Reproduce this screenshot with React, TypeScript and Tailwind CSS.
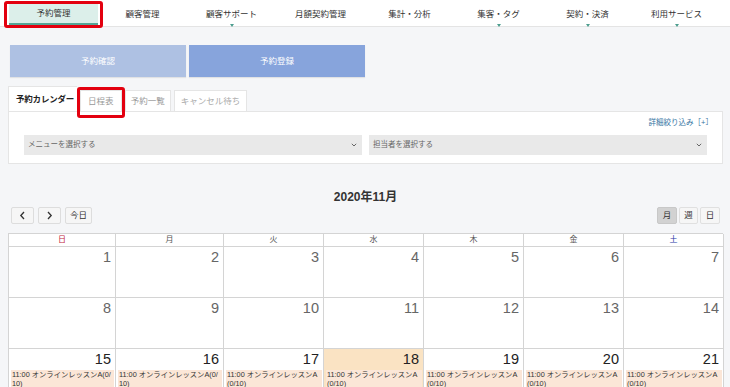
import React from "react";

const navItems = [
  { label: "予約管理", active: true },
  { label: "顧客管理" },
  { label: "顧客サポート", caret: true },
  { label: "月額契約管理" },
  { label: "集計・分析" },
  { label: "集客・タグ", caret: true },
  { label: "契約・決済", caret: true },
  { label: "利用サービス", caret: true },
];

const weekdays = ["日", "月", "火", "水", "木", "金", "土"];
const weeks = [
  [1, 2, 3, 4, 5, 6, 7],
  [8, 9, 10, 11, 12, 13, 14],
  [15, 16, 17, 18, 19, 20, 21],
];
const TODAY = 18;

function Chevron({ dir }: { dir: "left" | "right" }) {
  return (
    <svg width="7" height="9" viewBox="0 0 7 9" fill="none">
      <path
        d={dir === "left" ? "M5 1 L1.8 4.5 L5 8" : "M2 1 L5.2 4.5 L2 8"}
        stroke="#333"
        strokeWidth="1.3"
      />
    </svg>
  );
}

function SelectBox({ placeholder }: { placeholder: string }) {
  return (
    <div className="flex-1 h-[20px] bg-[#e9e9e9] flex items-center justify-between pl-[4px] pr-[5px] text-[7.5px] text-[#666]">
      <span>{placeholder}</span>
      <svg width="6" height="4" viewBox="0 0 6 4">
        <path d="M0.8 0.8 L3 3 L5.2 0.8" stroke="#666" strokeWidth="1" fill="none" />
      </svg>
    </div>
  );
}

function DayCell({ day, row }: { day: number; row: number }) {
  const today = day === TODAY;
  const current = row === 2;
  return (
    <div
      className={`h-[51px] border-r border-b border-[#d4d4d4] overflow-hidden ${
        today ? "bg-[#fae3c3]" : "bg-white"
      }`}
    >
      <div
        className={`text-right pr-[4px] pt-[2px] text-[14.5px] leading-[17px] ${
          current ? "text-[#222]" : "text-[#666]"
        }`}
      >
        {day}
      </div>
      {current && (
        <div className="mt-[2px] pl-[2px] pr-[1px] flex flex-col gap-[1px]">
          {[0, 1].map((i) => (
            <div
              key={i}
              className="bg-[#fbe6d7] text-[#333] text-[7.3px] leading-[9px] break-all px-[1px]"
            >
              11:00 オンラインレッスンA(0/10)
            </div>
          ))}
        </div>
      )}
    </div>
  );
}

export default function App() {
  return (
    <div className="w-[730px] h-[387px] overflow-hidden bg-[#f5f6f8] font-['Liberation_Sans','Noto_Sans_CJK_JP',sans-serif] text-[#333]">
      {/* top navigation */}
      <nav className="h-[27px] bg-white border-b border-[#e4e4e4] flex px-[9px] pt-[3px]">
        {navItems.map((item) => (
          <div
            key={item.label}
            className={`relative w-[89.5px] h-[22px] flex items-center justify-center text-[8.5px] text-[#333] ${
              item.active ? "bg-[#dcefea] border-b-2 border-[#55a596]" : ""
            }`}
          >
            {item.label}
            {item.caret && (
              <span className="absolute left-1/2 -translate-x-1/2 bottom-[-2px] w-0 h-0 border-l-[2.5px] border-r-[2.5px] border-t-[3px] border-l-transparent border-r-transparent border-t-[#4d9e8f]" />
            )}
            {item.active && (
              <span className="absolute left-[-5px] right-[-5px] top-[-2px] bottom-[-5px] border-[3px] border-[#e3000f] rounded-[3px]" />
            )}
          </div>
        ))}
      </nav>

      {/* action buttons */}
      <div className="flex gap-[3px] ml-[10px] mt-[18px]">
        <div className="w-[176px] h-[32px] bg-[#aec1e3] text-white text-[8.5px] flex items-center justify-center shadow-[0_1px_1px_rgba(0,0,0,0.08)]">
          予約確認
        </div>
        <div className="w-[176px] h-[32px] bg-[#87a4dc] text-white text-[8.5px] flex items-center justify-center shadow-[0_1px_1px_rgba(0,0,0,0.08)]">
          予約登録
        </div>
      </div>

      {/* tabs */}
      <div className="mx-[8px] mt-[9px] w-[715px]">
        <div className="flex items-end gap-[3px] text-[8.5px]">
          <div className="h-[25px] pl-[7px] pr-[3px] bg-white border-l border-t border-[#e5e5e5] flex items-center font-bold text-[#222] tracking-[-0.2px]">
            予約カレンダー
          </div>
          <div className="relative h-[21px] px-[7px] bg-white border border-b-0 border-[#e5e5e5] flex items-center text-[#999]">
            日程表
            <span className="absolute left-[-4px] right-[-4px] top-[-4px] bottom-[-7px] border-[3px] border-[#e3000f] rounded-[3px]" />
          </div>
          <div className="h-[21px] px-[5px] bg-white border border-b-0 border-[#e5e5e5] flex items-center text-[#999]">
            予約一覧
          </div>
          <div className="h-[21px] px-[6px] bg-white border border-b-0 border-[#e5e5e5] flex items-center text-[#aaa]">
            キャンセル待ち
          </div>
        </div>
        <div className="bg-white border border-[#e5e5e5] pt-[6px] pb-[8px] pl-[15px] pr-[15px]">
          <div className="text-right text-[7.5px] leading-[10px] text-[#33739f] mr-[-6px]">
            詳細絞り込み［+］
          </div>
          <div className="flex gap-[7px] mt-[7px]">
            <SelectBox placeholder="メニューを選択する" />
            <SelectBox placeholder="担当者を選択する" />
          </div>
        </div>
      </div>

      {/* calendar */}
      <div className="mx-[8px] w-[715px]">
        <div className="mt-[26px] text-center text-[12px] leading-[14px] font-bold text-[#333]">
          2020年11月
        </div>
        <div className="mt-[3px] flex justify-between px-[3px]">
          <div className="flex gap-[4px]">
            <button className="w-[23px] h-[17px] bg-[#f6f6f6] border border-[#ddd] rounded-[2px] flex items-center justify-center">
              <Chevron dir="left" />
            </button>
            <button className="w-[23px] h-[17px] bg-[#f6f6f6] border border-[#ddd] rounded-[2px] flex items-center justify-center">
              <Chevron dir="right" />
            </button>
            <button className="w-[27px] h-[17px] bg-[#f6f6f6] border border-[#ddd] rounded-[2px] text-[8.5px] text-[#333] flex items-center justify-center">
              今日
            </button>
          </div>
          <div className="flex gap-[2px] text-[8.5px]">
            <div className="w-[20px] h-[17px] bg-[#d2d2d2] border border-[#c8c8c8] rounded-[2px] flex items-center justify-center text-[#333]">
              月
            </div>
            <div className="w-[19px] h-[17px] bg-[#f6f6f6] border border-[#e0e0e0] rounded-[2px] flex items-center justify-center text-[#333]">
              週
            </div>
            <div className="w-[20px] h-[17px] bg-[#f6f6f6] border border-[#e0e0e0] rounded-[2px] flex items-center justify-center text-[#333]">
              日
            </div>
          </div>
        </div>

        <div className="mt-[9px] grid grid-cols-[107px_108px_100px_100px_100px_100px_100px] border-l border-t border-[#d4d4d4] bg-white">
          {weekdays.map((w, i) => (
            <div
              key={w}
              className={`h-[13px] border-r border-b border-[#d4d4d4] text-center text-[8px] leading-[12px] ${
                i === 0 ? "text-[#c0283c]" : i === 6 ? "text-[#2b3aa6]" : "text-[#555]"
              }`}
            >
              {w}
            </div>
          ))}
          {weeks.map((week, r) =>
            week.map((d) => <DayCell key={d} day={d} row={r} />)
          )}
        </div>
      </div>
    </div>
  );
}
